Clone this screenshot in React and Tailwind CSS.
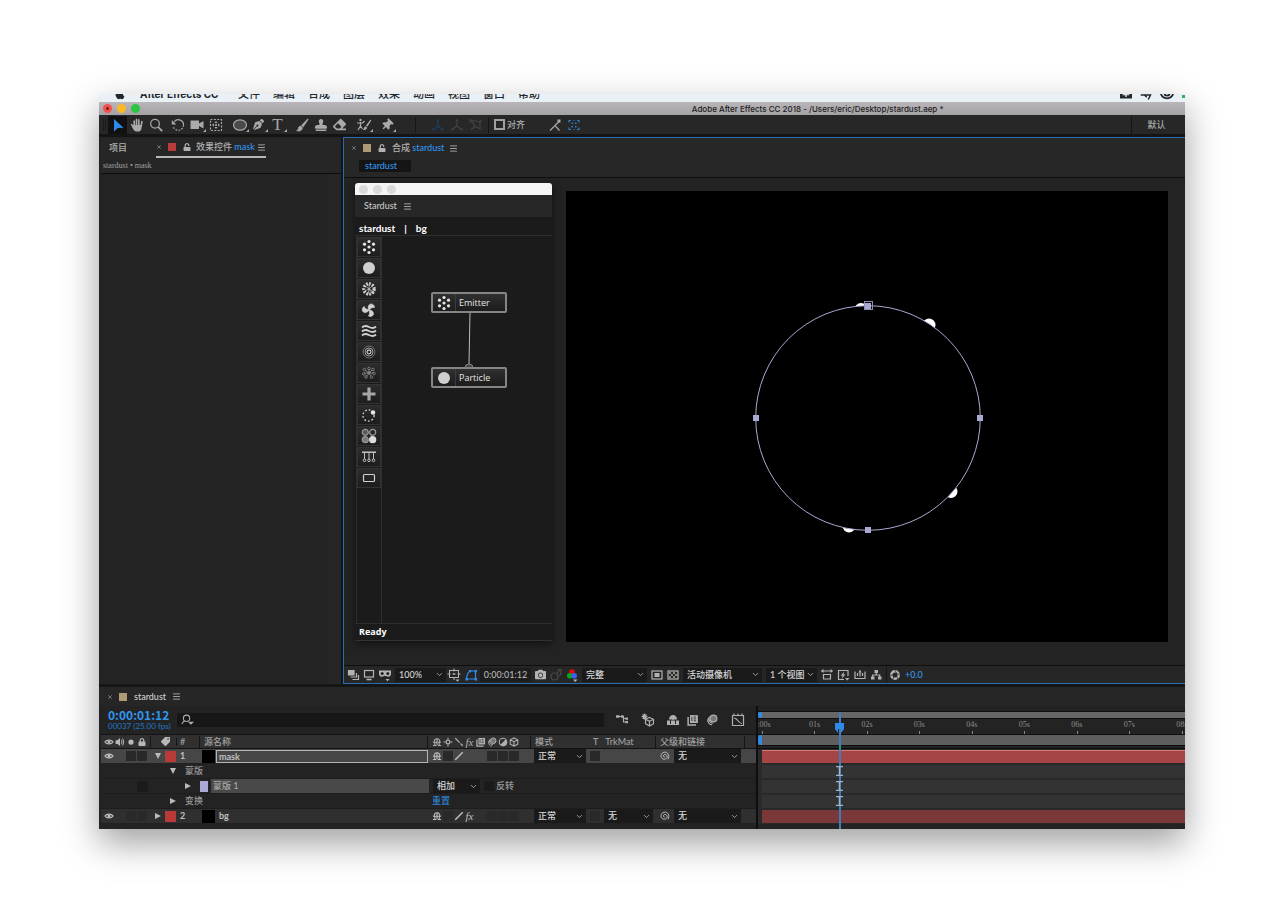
import { FaApple, FaCamera, FaEraser, FaLock, FaPenNib, FaStamp, FaTag, FaThumbtack, FaUnlock } from 'react-icons/fa'
import { ChevronDown, Menu, X } from 'lucide-react'
import clsx from 'clsx'

const MENUS = ['文件', '编辑', '合成', '图层', '效果', '动画', '视图', '窗口', '帮助']
const SECONDS = ['0:00s', '01s', '02s', '03s', '04s', '05s', '06s', '07s', '08s']
// seconds of the composition that fit in the visible part of the ruler
const VISIBLE_SECONDS = 8.06

function Svg({ children, className = 'size-4' }) {
  return (
    <svg
      viewBox="0 0 16 16"
      className={clsx('shrink-0', className)}
      fill="none"
      stroke="currentColor"
      strokeWidth="1.2"
      aria-hidden="true"
    >
      {children}
    </svg>
  )
}

/* ---------- toolbar icons ---------- */

const SelectIcon = () => (
  <Svg><path d="M4 2v12.5l3.800-3.400 5.700-.4z" fill="#2d8ceb" stroke="none" /></Svg>
)
const HandIcon = () => (
  <Svg>
    <path d="M5.200 8.500V4M7.500 8V2.400M9.800 8V2.800M12.200 9l.7-4.500M2.600 7.600l2.600 4" strokeWidth="1.6" strokeLinecap="round" />
    <path d="M4.400 8h8.200v2.500c0 2-1.300 4-2.800 4H7.200c-1.400 0-2.700-1.500-3.700-4z" fill="currentColor" stroke="none" />
  </Svg>
)
const ZoomIcon = () => (
  <Svg><circle cx="7" cy="6.8" r="4.4" /><path d="M10.200 10l4 4.200" strokeWidth="1.8" /></Svg>
)
const RotateIcon = () => (
  <Svg>
    <path d="M4.300 4.600A5.200 5.200 0 0 1 13.500 8.300" />
    <path d="M13.500 8.300A5.300 5.300 0 0 1 3.300 10" strokeDasharray="1.6 1.4" />
    <path d="M1.800 3v4.600h4.500z" fill="currentColor" stroke="none" />
  </Svg>
)
const CameraIcon = () => (
  <Svg>
    <path d="M1.500 3.500h8.500v8.500H1.500zM10 6.500l4.500-2.500v7.500L10 9z" fill="currentColor" stroke="none" />
  </Svg>
)
const AnchorIcon = () => (
  <Svg>
    <rect x="2.5" y="2.5" width="11" height="11" strokeDasharray="2 1.4" />
    <path d="M8 4l1.600 2H6.400zM8 12l1.600-2H6.400zM4 8l2-1.600v3.200zM12 8l-2-1.600v3.200z" fill="currentColor" stroke="none" />
    <path d="M7 7l2 2M9 7L7 9" strokeWidth="0.8" />
  </Svg>
)
const EllipseIcon = () => (
  <Svg><ellipse cx="8" cy="8" rx="6.5" ry="5.2" fill="#4a4a4a" /></Svg>
)
const BrushIcon = () => (
  <Svg>
    <path d="M13.800 1.800L7.500 8.300l1.700 1.600 5-7.300zM6.800 9c-2 .2-2.400 1.600-2.600 3-.1.800-.8 1.300-1.700 1.600 2.800 1 5.700.3 6-2.800z" fill="currentColor" stroke="currentColor" strokeWidth="0.6" />
  </Svg>
)
const RotoIcon = () => (
  <Svg>
    <circle cx="4.5" cy="3" r="1.2" fill="currentColor" stroke="none" />
    <path d="M1 6h5.500M4.500 5v4l-2.500 4M4.500 9l2 3M6.500 6L8.500 4" />
    <path d="M14.500 2.500l-4.500 6 1.300 1.200L15.300 3.500zM9.500 9.300c-1.500.5-1 2.500-2.700 3.500 2.500.8 4.200-.5 4.200-2.200z" fill="currentColor" stroke="none" />
  </Svg>
)
const AxisIcon = () => (
  <Svg>
    <path d="M8 9V3M8 9l-4.500 3.500M8 9l4.500 3.500" />
    <path d="M8 1.500l1.500 2.500h-3zM2 13.800l.8-2.800 1.800 2zM14 13.800l-.8-2.800-1.800 2z" fill="currentColor" stroke="none" />
  </Svg>
)
const ViewAxisIcon = () => (
  <Svg><path d="M3 3l9 2v7L7 9zM12 5l2-2M7 9l-4 4M2 2v4" /></Svg>
)
const SnapEdgeIcon = () => (
  <Svg>
    <path d="M3 13.500l5-5 4.500 5M8 8.500l4-4" />
    <path d="M10.500 2.500h3v3h-3z" fill="currentColor" stroke="none" />
  </Svg>
)
const SnapBoxIcon = () => (
  <Svg>
    <path d="M3 5.500V3.500H5M11 3.500h2V5.500M13 10.500v2H11M5 12.500H3v-2" />
    <path d="M5.500 5.500h1.500v1.500H5.500zM9 5.500h1.500v1.500H9zM5.500 9h1.500v1.500H5.500zM9 9h1.500v1.500H9z" fill="currentColor" stroke="none" />
    <path d="M7.500 3.500h1M7.500 12.500h1" />
  </Svg>
)

/* ---------- Stardust icons ---------- */

const EMITTER_DOTS = [[8, 2.5], [8, 8], [8, 13.5], [3.5, 5.2], [12.5, 5.2], [3.5, 10.8], [12.5, 10.8]]
const AUX_DOTS = [[8, 8], [3.5, 4.5], [8, 3.5], [12, 4.5], [2.8, 9], [13, 8.5], [5, 12], [10.5, 12.2]]
const BLADE = 'M8 8C5.500 6.500 5.500 2.500 8 1.500c2-.5 4 .5 4.200 2.500-2 0-3 1.500-4.200 4z'

const EmitterIcon = () => (
  <Svg>
    <g fill="#e6e6e6" stroke="none">
      {EMITTER_DOTS.map(([x, y]) => <circle key={`${x}-${y}`} cx={x} cy={y} r="1.6" />)}
    </g>
  </Svg>
)
const ParticleIcon = () => (
  <Svg><circle cx="8" cy="8" r="6" fill="#cfcfcf" stroke="none" /></Svg>
)
const ReplicaIcon = () => (
  <Svg>
    <circle cx="8" cy="8" r="5.2" strokeWidth="3.2" strokeDasharray="1.7 1.3" />
    <path d="M8 8L3 4M8 8l5-4.500M8 8l5.500 3M8 8l-1 5.500M8 8l-5 2.500M8 8V3M8 8l3.500 5" strokeWidth="0.7" />
  </Svg>
)
const TurbulenceIcon = () => (
  <Svg>
    <g fill="currentColor" stroke="currentColor" strokeWidth="0.6">
      <path d={BLADE} transform="rotate(20 8 8)" />
      <path d={BLADE} transform="rotate(140 8 8)" />
      <path d={BLADE} transform="rotate(260 8 8)" />
    </g>
  </Svg>
)
const WaveIcon = () => (
  <Svg>
    <path d="M1 4.500c2-2 4-2 7-.5s5 1.500 7-.5M1 8.500c2-2 4-2 7-.5s5 1.500 7-.5M1 12.500c2-2 4-2 7-.5s5 1.500 7-.5" strokeWidth="1.8" />
  </Svg>
)
const FieldIcon = () => (
  <Svg>
    <circle cx="8" cy="8" r="6" strokeWidth="0.7" opacity="0.6" />
    <circle cx="8" cy="8" r="4" strokeWidth="0.9" opacity="0.8" />
    <circle cx="8" cy="8" r="1.9" strokeWidth="1.1" />
  </Svg>
)
const AuxIcon = () => (
  <Svg>
    <g stroke="#8a8a8a" strokeWidth="0.8">
      {AUX_DOTS.map(([x, y]) => <circle key={`${x}-${y}`} cx={x} cy={y} r="1.3" />)}
      <path d="M8 8L4 5M8 8V4M8 8l3-3M8 8H3M8 8h5M8 8l-2 3M8 8l2 3" />
    </g>
  </Svg>
)
const PlusIcon = () => (
  <Svg><path d="M8 1.500v13M1.500 8h13" stroke="#a6a6a6" strokeWidth="3.2" strokeLinecap="butt" /></Svg>
)
const OrbitIcon = () => (
  <Svg>
    <circle cx="7.5" cy="8.5" r="5.6" strokeDasharray="1.8 1.9" strokeWidth="1.3" />
    <circle cx="12" cy="5.5" r="2.3" fill="#e6e6e6" stroke="none" />
  </Svg>
)
const MaterialIcon = () => (
  <Svg>
    <circle cx="4.3" cy="4.3" r="3" fill="#5a5a5a" stroke="#999" />
    <circle cx="11.7" cy="4.3" r="3" stroke="#999" />
    <circle cx="4.3" cy="11.7" r="3" fill="#777" stroke="#999" />
    <circle cx="11.7" cy="11.7" r="3" fill="#dcdcdc" stroke="#dcdcdc" />
  </Svg>
)
const PhysicsIcon = () => (
  <Svg>
    <path d="M1 3.200h14" strokeWidth="1.4" />
    <path d="M3.500 4v6M8 4v6M12.500 4v6" strokeWidth="0.9" />
    <circle cx="3.5" cy="11.3" r="1.3" strokeWidth="0.9" />
    <circle cx="8" cy="11.3" r="1.3" strokeWidth="0.9" />
    <circle cx="12.5" cy="11.3" r="1.3" strokeWidth="0.9" />
  </Svg>
)
const GroupIcon = () => (
  <Svg><rect x="2.5" y="4.5" width="11" height="7" rx="1" /></Svg>
)

/* ---------- viewer footer icons ---------- */

const PreviewIcon = () => (
  <Svg>
    <path d="M3.500 3.500h5.500v4.500H3.500z" fill="currentColor" />
    <path d="M5.500 10h6v-4M7.500 12.500h6V8" />
  </Svg>
)
const MonitorIcon = () => (
  <Svg><rect x="3.5" y="3.500" width="9" height="6.500" /><path d="M5.500 12.500h5" strokeWidth="1.6" /></Svg>
)
const MaskViewIcon = () => (
  <Svg>
    <path d="M2 3.500h12v3.500c0 1.500-1.200 2.800-2.800 2.800-1.400 0-2-1-3.200-1s-1.800 1-3.200 1C3.200 9.800 2 8.500 2 7z" fill="currentColor" stroke="none" />
    <circle cx="5.2" cy="6.4" r="1.5" fill="#232323" stroke="none" />
    <circle cx="10.800" cy="6.4" r="1.5" fill="#232323" stroke="none" />
    <path d="M8.500 12h4l-2 2.200z" fill="currentColor" stroke="none" />
  </Svg>
)
const GridIcon = () => (
  <Svg>
    <rect x="3.500" y="3.500" width="9" height="7" strokeWidth="1" />
    <path d="M8 1.500v3M8 6v2M8 10v3M1.500 7h3M6.500 7h3M11.500 7h3" strokeWidth="1" />
    <path d="M9.500 12.500h4l-2 2.200z" fill="currentColor" stroke="none" />
  </Svg>
)
const MaskPathIcon = () => (
  <Svg>
    <path d="M3.500 12C4 7.500 5.500 4.500 7.500 4H12.500v8z" />
    <path d="M2.500 11h2.500v2.500H2.500zM6 3h2.200v2.200H6zM11.500 3h2.500v2.200h-2.500zM11.500 11h2.500v2.500h-2.500z" fill="currentColor" stroke="none" />
  </Svg>
)
const SnapshotIcon = () => (
  <Svg>
    <circle cx="6.500" cy="9.500" r="3.500" />
    <path d="M9 6l2.500-2.500M10 2.500h3v3M10.500 9a3 3 0 0 0 2-4" />
  </Svg>
)
const ChannelIcon = () => (
  <Svg>
    <g stroke="none">
      <circle cx="8" cy="5" r="2.800" fill="#e00a0a" />
      <circle cx="5.800" cy="8.800" r="2.800" fill="#08a51d" />
      <circle cx="10.200" cy="8.800" r="2.800" fill="#3a62f0" />
      <path d="M9 12.500h4.500l-2.300 2.400z" fill="currentColor" />
    </g>
  </Svg>
)
const RoiIcon = () => (
  <Svg>
    <rect x="3" y="4" width="10" height="8" />
    <path d="M5.500 6h5v4h-5z" fill="currentColor" stroke="none" />
  </Svg>
)
const TransparencyIcon = () => (
  <Svg>
    <rect x="3" y="4" width="10" height="8" />
    <path d="M4 5h2v2H4zM8 5h2v2H8zM6 7h2v2H6zM10 7h2v2h-2zM4 9h2v2H4zM8 9h2v2H8z" fill="currentColor" stroke="none" opacity="0.7" />
  </Svg>
)
const PixelAspectIcon = () => (
  <Svg>
    <path d="M2.500 4h11M4.500 7.500h7v4.500h-7z" />
    <path d="M4.500 2v4L2 4zM11.500 2v4L14 4z" fill="currentColor" stroke="none" />
  </Svg>
)
const FastPreviewIcon = () => (
  <Svg>
    <path d="M13 9V3.500H3.500v9h5.500" />
    <path d="M9.500 4.500L5.500 8.500h2.200L6.500 12l4-4.500H8.300z" fill="currentColor" stroke="none" />
    <path d="M10 11h4.500l-2.200 2.400z" fill="currentColor" stroke="none" />
  </Svg>
)
const TimelineIcon = () => (
  <Svg><path d="M3 4.500v7h10v-7M5.500 6v3M10.500 6v3M8 3.500v6M3 9.500" /><path d="M6.500 5.500L8 3l1.500 2.500z" fill="currentColor" stroke="none" /></Svg>
)
const FlowIcon = () => (
  <Svg>
    <path d="M6.500 3h3.500v3H6.500zM3 9.500h3.500v3H3zM10 9.500h3.500v3H10z" fill="currentColor" stroke="none" />
    <path d="M8.200 5v3M4.700 10V8h7v2" />
  </Svg>
)
const ApertureIcon = () => (
  <Svg>
    <circle cx="8" cy="8" r="3.700" strokeWidth="2.400" />
    <path d="M8 3l2 4M13 7l-4.500.5M11 12l-2-3.500M6 12.500l1-4M3 8.500l4-1" stroke="#262626" strokeWidth="0.7" />
  </Svg>
)

/* ---------- timeline icons ---------- */

const EyeIcon = () => (
  <Svg className="size-[10px]">
    <path d="M1.500 8C4 3.800 12 3.800 14.500 8 12 12.200 4 12.200 1.500 8z" strokeWidth="2" />
    <circle cx="8" cy="8" r="2.5" fill="currentColor" stroke="none" />
  </Svg>
)
const SpeakerIcon = () => (
  <Svg className="size-[10px]">
    <path d="M1 5h3l4-3.500v13L4 11H1z" fill="currentColor" stroke="none" />
    <path d="M10 4.500c1.500 2 1.500 5 0 7M12 2.500c2.500 3 2.500 8 0 11" strokeWidth="1.6" />
  </Svg>
)
const SoloIcon = () => (
  <Svg className="size-[10px]"><circle cx="8" cy="8" r="4.2" fill="currentColor" stroke="none" /></Svg>
)
const ShyIcon = () => (
  <Svg className="size-[10px]">
    <path d="M3.500 8c0-7 9-7 9 0M1.500 8.500h13M8 3v10.500M1.500 13.500h5M9.500 13.500h5M4.500 9v4M11.500 9v4" strokeWidth="1.7" />
  </Svg>
)
const SunIcon = () => (
  <Svg className="size-[10px]">
    <circle cx="8" cy="8" r="3" strokeWidth="2" />
    <path d="M8 1v3M8 12v3M1 8h3M12 8h3" strokeWidth="1.8" />
  </Svg>
)
const BackslashIcon = () => (
  <Svg className="size-[10px]"><path d="M2 2l12 12" strokeWidth="2" strokeDasharray="10 2" /></Svg>
)
const SlashIcon = () => (
  <Svg className="size-[10px]"><path d="M2 14L14 2" strokeWidth="2.2" /></Svg>
)
const BlendIcon = ({ className = 'size-[10px]' }) => (
  <Svg className={className}>
    <path d="M1.500 4v10.500H12" strokeWidth="2" />
    <path d="M4 1.500h10.500V12H4z" fill="currentColor" stroke="none" />
    <path d="M6.500 4v5.500M9 4h3M9 6.500h3M9 9h3" stroke="#333" />
  </Svg>
)
const BlurIcon = ({ className = 'size-[10px]' }) => (
  <Svg className={className}>
    <circle cx="10" cy="6" r="4.5" fill="#777" strokeWidth="1.5" />
    <path d="M5 3.500C2 6.500 5.500 13 9.500 12M3 6c-2 3.500 1.500 9 5 8.200" strokeWidth="1.5" />
  </Svg>
)
const AdjustIcon = () => (
  <Svg className="size-[10px]">
    <circle cx="8" cy="8" r="6" strokeWidth="1.8" />
    <path d="M12.200 3.800A6 6 0 1 1 3.800 12.200z" fill="currentColor" stroke="none" />
  </Svg>
)
const CubeIcon = () => (
  <Svg className="size-[10px]">
    <path d="M8 1.500l6 3v7l-6 3-6-3v-7zM2 4.500l6 3 6-3M8 7.500v7" strokeWidth="1.7" />
  </Svg>
)
const SpiralIcon = () => (
  <Svg className="size-[11px]">
    <path d="M8.500 8.500c-2 1-3.200-2-.8-3.200 3-1.300 5.500 2.500 3.300 5.200-2.800 3.200-8.600.8-8-3.800C3.600 1 11 0 13.500 4.500c1.200 2.200 1 5.500-.5 7.500" strokeWidth="1.4" />
  </Svg>
)
const MiniFlowIcon = () => (
  <Svg>
    <path d="M3 4.500h6.500v5.500h3M9.500 6.500h3" />
    <path d="M2 3.200h3.500v2.600H2zM7 3.200h2.500v2.600H7zM11.500 5.500h2.500v2.300h-2.500zM11.500 9h2.500v2.300h-2.500z" fill="currentColor" stroke="none" />
  </Svg>
)
const Draft3dIcon = () => (
  <Svg>
    <path d="M4.500 1.500v6M1.500 4.500h6M2.500 2.500l4 4M6.500 2.500l-4 4" />
    <path d="M9.500 5.500l4 1.800v4.400L9.500 14 5.500 11.700V7.300zM5.500 7.300l4 2 4-2M9.500 9.300v4.500" />
  </Svg>
)
const HideShyIcon = () => (
  <Svg>
    <path d="M4 7.500c0-6 8-6 8 0zM2 8.500h3v4.500H2zM6 8.500h4v4.500H6zM11 8.500h3v4.500h-3z" fill="currentColor" stroke="none" />
    <path d="M2 12.500h12M8 5v3" />
  </Svg>
)
const GraphIcon = () => (
  <Svg>
    <path d="M2.500 3.500h11V13.500h-11zM4 1.500v2M8 1.500v2M12 1.500v2" />
    <path d="M4 6c4 0 4 5.500 8 5.500" />
  </Svg>
)

/* ---------- controls ---------- */

function ToolButton({ label, children, active, more, className }) {
  return (
    <button
      type="button"
      aria-label={label}
      className={clsx(
        'relative flex h-[18px] w-[19px] shrink-0 items-center justify-center',
        active && 'bg-[#111]',
        className,
      )}
    >
      {children}
      {more && (
        <svg viewBox="0 0 3 3" className="absolute right-0 bottom-[2px] size-[3px]" aria-hidden="true">
          <path d="M3 0v3H0z" fill="currentColor" />
        </svg>
      )}
    </button>
  )
}

function IconButton({ label, children, className }) {
  return (
    <button
      type="button"
      aria-label={label}
      className={clsx('flex h-4 w-4 shrink-0 items-center justify-center', className)}
    >
      {children}
    </button>
  )
}

function Select({ label, value, className }) {
  return (
    <span className={clsx('relative flex h-[14px] shrink-0 items-center bg-[#1a1a1a]', className)}>
      <select
        aria-label={label}
        defaultValue={value}
        className="h-full w-full appearance-none bg-transparent pl-1 text-[9px] leading-[14px] font-medium text-[#d6d6d6]"
      >
        <option>{value}</option>
      </select>
      <ChevronDown className="pointer-events-none absolute right-[2px] size-[9px] text-[#a0a0a0]" strokeWidth={2.5} />
    </span>
  )
}

const Divider = ({ className }) => <span className={clsx('w-px shrink-0 bg-[#161616]', className)} />
const PanelMenu = () => (
  <button type="button" aria-label="面板菜单"><Menu className="size-[9px] text-[#a8a8a8]" strokeWidth={2.5} /></button>
)
const CloseTab = () => (
  <button type="button" aria-label="关闭"><X className="size-[6px] text-[#8c8c8c]" strokeWidth={3} /></button>
)

function MenuBar() {
  return (
    <nav className="flex h-2 items-end overflow-hidden bg-[#e9f1f7] pl-[15px] text-[11px] leading-4 text-[#22272b]">
      <FaApple className="mb-[2px] size-3 shrink-0" />
      <span className="ml-[14px] w-[85px] shrink-0 font-[Inter] text-[10px] font-bold whitespace-nowrap">After Effects CC</span>
      <ul className="ml-[13px] flex gap-[13px]">
        {MENUS.map((name) => (
          <li key={name} className="whitespace-nowrap"><a href="#menu">{name}</a></li>
        ))}
      </ul>
      <div className="ml-auto flex items-end gap-2">
        <Svg className="mb-[2px] size-3"><path d="M0 2h16v12H0z" fill="currentColor" stroke="none" /><path d="M8 2v10M3.500 9h9" stroke="#fff" strokeWidth="1.6" /></Svg>
        <Svg className="mb-px size-3"><path d="M1 8h13l-3 6M6 8l3 3" strokeWidth="2" /></Svg>
        <Svg className="mb-[2px] size-[14px]"><ellipse cx="8" cy="8" rx="7" ry="6" strokeWidth="2" /><circle cx="8" cy="8" r="3" strokeWidth="2" /></Svg>
        <span className="mb-1 size-[3px] bg-[#2fae66]" />
      </div>
    </nav>
  )
}

function TitleBar() {
  return (
    <header className="flex h-[13px] items-center bg-linear-to-b from-[#b9b5b9] to-[#a5a2a5] pl-1">
      <div className="flex gap-[5px]">
        <button type="button" aria-label="关闭窗口" className="flex size-[9px] items-center justify-center rounded-full bg-[#f4504d]">
          <span className="size-[3px] rounded-full bg-[#7d1210]" />
        </button>
        <button type="button" aria-label="最小化" className="size-[9px] rounded-full bg-[#fbb927]" />
        <button type="button" aria-label="缩放" className="size-[9px] rounded-full bg-[#2bc540]" />
      </div>
      <h1 className="ml-[51%] font-[Inter] text-[8px] leading-3 font-medium whitespace-nowrap text-[#1d1d1d]">
        Adobe After Effects CC 2018 - /Users/eric/Desktop/stardust.aep *
      </h1>
    </header>
  )
}

function Toolbar() {
  return (
    <div className="flex h-[19px] items-center bg-[#272727] pl-1 text-[#aaa]">
      <span className="mr-[2px] h-3 w-[3px] border-x border-[#1a1a1a]" />
      <div className="flex">
        <ToolButton label="选取工具" active><SelectIcon /></ToolButton>
        <ToolButton label="手形工具"><HandIcon /></ToolButton>
        <ToolButton label="缩放工具"><ZoomIcon /></ToolButton>
      </div>
      <div className="ml-[3px] flex">
        <ToolButton label="旋转工具"><RotateIcon /></ToolButton>
        <ToolButton label="摄像机工具" more><CameraIcon /></ToolButton>
        <ToolButton label="锚点工具"><AnchorIcon /></ToolButton>
      </div>
      <div className="ml-[5px] flex">
        <ToolButton label="椭圆工具" more><EllipseIcon /></ToolButton>
        <ToolButton label="钢笔工具" more><FaPenNib className="size-[11px]" /></ToolButton>
        <ToolButton label="文字工具" more>
          <span className="font-['Liberation_Serif'] text-[17px] leading-4">T</span>
        </ToolButton>
      </div>
      <div className="ml-[5px] flex">
        <ToolButton label="画笔工具"><BrushIcon /></ToolButton>
        <ToolButton label="仿制图章工具"><FaStamp className="size-3" /></ToolButton>
        <ToolButton label="橡皮擦工具"><FaEraser className="size-[13px]" /></ToolButton>
      </div>
      <div className="ml-[5px] flex gap-1">
        <ToolButton label="Roto 笔刷工具" more><RotoIcon /></ToolButton>
        <ToolButton label="操控点工具" more><FaThumbtack className="size-3 rotate-45" /></ToolButton>
      </div>
      <Divider className="ml-[19px] h-4" />
      <div className="ml-3 flex text-[#444]">
        <ToolButton label="本地轴模式" className="text-[#1d4166]"><AxisIcon /></ToolButton>
        <ToolButton label="世界轴模式"><AxisIcon /></ToolButton>
        <ToolButton label="视图轴模式"><ViewAxisIcon /></ToolButton>
      </div>
      <Divider className="ml-[3px] h-4" />
      <label className="ml-[5px] flex items-center gap-[2px] text-[9px] leading-4">
        <input type="checkbox" className="size-[11px] appearance-none border-2 border-[#a0a0a0]" />
        对齐
      </label>
      <div className="ml-5 flex">
        <ToolButton label="对齐边缘"><SnapEdgeIcon /></ToolButton>
        <ToolButton label="对齐特征" className="text-[#2d7fca]"><SnapBoxIcon /></ToolButton>
      </div>
      <Divider className="ml-auto h-[19px]" />
      <button type="button" className="w-[53px] pr-1 text-[9px] leading-4">默认</button>
    </div>
  )
}

function EffectControls() {
  return (
    <section className="flex w-[242px] shrink-0 flex-col bg-[#232323] pt-px pl-[2px]">
      <div className="flex h-5 items-center bg-[#262626] text-[9px] leading-4">
        <a href="#project" className="ml-2 w-[47px] text-[#b0b0b0]">项目</a>
        <div className="flex h-5 w-[110px] items-center border-b-2 border-[#b8b8b8] text-[#b0b0b0]">
          <CloseTab />
          <span className="ml-[6px] size-[8px] bg-[#b83c3c]" />
          <FaUnlock className="ml-[7px] size-[8px]" />
          <span className="ml-[5px] whitespace-nowrap">效果控件 <span className="text-[#3096ee]">mask</span></span>
          <span className="ml-auto flex"><PanelMenu /></span>
        </div>
      </div>
      <div className="flex h-4 items-center border-b border-[#0c0c0c] bg-[#262626] pl-[2px] font-['Liberation_Serif'] text-[8px] font-normal text-[#a0a0a0]">
        stardust • mask
      </div>
      <div className="flex-1 border-r-[13px] border-[#262626]" />
    </section>
  )
}

const TOOLS = [
  ['Emitter', EmitterIcon],
  ['Particle', ParticleIcon],
  ['Replica', ReplicaIcon],
  ['Turbulence', TurbulenceIcon],
  ['Wave', WaveIcon],
  ['Field', FieldIcon],
  ['Auxiliary', AuxIcon],
  ['Transform', PlusIcon],
  ['Motion', OrbitIcon],
  ['Material', MaterialIcon],
  ['Physics', PhysicsIcon],
  ['Group', GroupIcon],
]

function Node({ name, icon: Icon, className }) {
  return (
    <div
      className={clsx(
        'absolute left-[49px] flex h-[21px] w-[76px] items-center rounded-[2px] border-2 border-[#858585] bg-linear-to-b from-[#303030] to-[#1c1c1c] text-[9px] text-[#e6e6e6]',
        className,
      )}
    >
      <span className="flex h-full w-[23px] items-center justify-center border-r border-[#3c3c3c]"><Icon /></span>
      <span className="pl-[3px] font-['Open_Sans'] leading-4">{name}</span>
    </div>
  )
}

function StardustWindow() {
  return (
    <aside className="mt-[5px] mb-6 flex w-[197px] shrink-0 flex-col overflow-hidden rounded-t-[3px] border-b border-[#333] bg-[#1c1b1b] shadow-[0_3px_8px_rgba(0,0,0,0.5)]">
      <div className="flex h-3 items-center gap-[5px] bg-[#f5f5f5] pl-1">
        <span className="size-[9px] rounded-full bg-[#dadada]" />
        <span className="size-[9px] rounded-full bg-[#dadada]" />
        <span className="size-[9px] rounded-full bg-[#dadada]" />
      </div>
      <div className="flex h-[22px] items-center gap-[6px] bg-[#272727] pl-[9px] text-[9px] text-[#c8c8c8]">
        Stardust <PanelMenu />
      </div>
      <div className="flex h-[19px] items-end gap-[9px] border-b border-[#2e2e2e] pl-1 text-[10px] leading-[14px] font-bold text-white">
        <span>stardust</span><span>|</span><span>bg</span>
      </div>
      <div className="flex flex-1">
        <div className="ml-px w-[26px] border-x border-[#2e2e2e]">
          {TOOLS.map(([name, Icon]) => (
            <button
              key={name}
              type="button"
              aria-label={name}
              className="mt-px flex h-5 w-full items-center justify-center border border-[#333] bg-linear-to-b from-[#2c2c2c] to-[#1d1d1d] text-[#d0d0d0]"
            >
              <Icon />
            </button>
          ))}
        </div>
        <div className="relative flex-1">
          <svg className="absolute top-[76px] left-[76px] h-[56px] w-5" viewBox="0 0 20 56" aria-hidden="true">
            <path d="M12 0L11 52" stroke="#bbb" strokeWidth="1" />
            <circle cx="11" cy="56" r="4" fill="#444" stroke="#888" />
          </svg>
          <Node name="Emitter" icon={EmitterIcon} className="top-[56px]" />
          <Node name="Particle" icon={ParticleIcon} className="top-[131px]" />
        </div>
      </div>
      <div className="h-[17px] border-t border-[#2e2e2e] pl-1 font-['Open_Sans'] text-[9px] leading-4 font-bold text-white">Ready</div>
    </aside>
  )
}

function Canvas() {
  return (
    <svg viewBox="0 0 602 451" className="mt-[13px] mr-[17px] mb-[23px] ml-[14px] min-w-0 flex-1 self-start bg-black" role="img" aria-label="合成视图">
      <defs>
        <clipPath id="outside">
          <path clipRule="evenodd" d="M0 0h602v451H0zM414.300 227a112.300 112.300 0 1 0-224.600 0a112.300 112.300 0 1 0 224.600 0z" />
        </clipPath>
      </defs>
      <g clipPath="url(#outside)" fill="#fff">
        <circle cx="295" cy="118.500" r="6.5" />
        <circle cx="363" cy="134" r="6.5" />
        <circle cx="385" cy="300.500" r="6.5" />
        <circle cx="283" cy="335" r="6.5" />
      </g>
      <circle cx="302" cy="227" r="112.3" fill="none" stroke="#a9a8d0" strokeWidth="1" />
      <g fill="#a9a8d0">
        <rect x="299" y="112" width="6" height="6" />
        <rect x="411" y="224" width="6" height="6" />
        <rect x="299" y="336" width="6" height="6" />
        <rect x="187" y="224" width="6" height="6" />
      </g>
      <rect x="298.5" y="110.5" width="8" height="8" fill="none" stroke="#8f8eb4" />
    </svg>
  )
}

function ViewerFooter() {
  return (
    <footer className="flex h-[18px] items-center overflow-hidden border-t border-[#0f0f0f] bg-[#262626] pl-px text-[#b4b4b4]">
      <IconButton label="始终预览此视图"><PreviewIcon /></IconButton>
      <IconButton label="主查看器"><MonitorIcon /></IconButton>
      <IconButton label="沉浸式"><MaskViewIcon /></IconButton>
      <Select label="放大率" value="100%" className="ml-[2px] w-[51px]" />
      <IconButton label="网格和参考线"><GridIcon /></IconButton>
      <IconButton label="蒙版路径可见性" className="ml-px text-[#2d8ceb]"><MaskPathIcon /></IconButton>
      <button type="button" className="ml-px h-[14px] w-[51px] bg-[#1d1d1d] text-[9px] leading-[14px]">0:00:01:12</button>
      <IconButton label="拍摄快照" className="ml-px"><FaCamera className="size-[11px]" /></IconButton>
      <IconButton label="显示快照" className="text-[#484848]"><SnapshotIcon /></IconButton>
      <IconButton label="通道"><ChannelIcon /></IconButton>
      <Select label="分辨率" value="完整" className="ml-[2px] w-[65px]" />
      <IconButton label="目标区域" className="ml-[2px]"><RoiIcon /></IconButton>
      <IconButton label="透明网格"><TransparencyIcon /></IconButton>
      <Select label="3D 视图" value="活动摄像机" className="ml-[2px] w-[79px]" />
      <Select label="视图布局" value="1 个视图" className="ml-1 w-[51px]" />
      <IconButton label="像素长宽比" className="ml-[2px]"><PixelAspectIcon /></IconButton>
      <IconButton label="快速预览"><FastPreviewIcon /></IconButton>
      <IconButton label="时间轴" className="ml-px"><TimelineIcon /></IconButton>
      <IconButton label="流程图"><FlowIcon /></IconButton>
      <Divider className="ml-[2px] h-4" />
      <IconButton label="重置曝光度"><ApertureIcon /></IconButton>
      <button type="button" className="ml-[2px] text-[9px] leading-4 text-[#3096ee]">+0.0</button>
    </footer>
  )
}

function Composition() {
  return (
    <section className="ml-[2px] flex min-w-0 flex-1 flex-col border-y border-l border-[#2a6cb4] bg-[#232323]">
      <div className="flex h-5 items-center bg-[#272727] pl-[7px] text-[9px] leading-4 text-[#b0b0b0]">
        <CloseTab />
        <span className="ml-[6px] size-[8px] bg-[#ae9a74]" />
        <FaUnlock className="ml-[7px] size-[8px]" />
        <span className="mr-[5px] ml-[6px]">合成 <span className="text-[#3096ee]">stardust</span></span>
        <PanelMenu />
      </div>
      <div className="flex h-5 items-start border-b border-[#0f0f0f] bg-[#272727] pt-[2px] pl-[15px]">
        <a href="#stardust" className="h-3 w-[52px] bg-[#151515] pl-[6px] text-[9px] leading-3 text-[#3096ee]">stardust</a>
      </div>
      <div className="flex flex-1 pl-[11px]">
        <StardustWindow />
        <Canvas />
      </div>
      <ViewerFooter />
    </section>
  )
}

/* ---------- timeline ---------- */

const Cell = ({ on, children }) => (
  <span className="flex h-3 w-[11px] shrink-0 items-center justify-center">
    {on ? <span className="size-[10px] bg-[#292929]" /> : children}
  </span>
)

const Twirl = ({ open }) => (
  <button type="button" aria-label={open ? '折叠' : '展开'} className="flex w-[6px] justify-center">
    <svg viewBox="0 0 6 6" className={clsx('size-[6px]', open && 'rotate-90')} aria-hidden="true">
      <path d="M0 0l6 3-6 3z" fill="#bbb" />
    </svg>
  </button>
)

function LayerHeader() {
  return (
    <div className="flex h-[15px] items-center border-y border-[#141414] bg-[#303030] text-[9px] leading-3 text-[#a0a0a0]">
      <div className="flex w-[50px] shrink-0 border-r border-[#161616] pl-[2px] text-[#b8b8b8]">
        <Cell><EyeIcon /></Cell>
        <Cell><SpeakerIcon /></Cell>
        <Cell><SoloIcon /></Cell>
        <Cell><FaLock className="size-[8px]" /></Cell>
      </div>
      <div className="flex w-[49px] shrink-0 items-center border-r border-[#161616] pl-[10px]">
        <FaTag className="size-[9px] rotate-90 text-[#b8b8b8]" />
        <Divider className="ml-[6px] h-2" />
        <span className="ml-[3px]">#</span>
      </div>
      <div className="w-[228px] shrink-0 border-r border-[#161616] pl-1">源名称</div>
      <div className="flex w-[103px] shrink-0 border-r border-[#161616] pl-[3px] text-[#b0b0b0]">
        <Cell><ShyIcon /></Cell>
        <Cell><SunIcon /></Cell>
        <Cell><BackslashIcon /></Cell>
        <Cell><i className="font-['Liberation_Serif'] text-[11px]">fx</i></Cell>
        <Cell><BlendIcon /></Cell>
        <Cell><BlurIcon /></Cell>
        <Cell><AdjustIcon /></Cell>
        <Cell><CubeIcon /></Cell>
      </div>
      <div className="w-[60px] shrink-0 pl-1">模式</div>
      <div className="flex w-[65px] shrink-0 gap-[7px] border-r border-[#161616] pl-[2px]"><span>T</span><span>TrkMat</span></div>
      <div className="mr-[10px] w-[89px] shrink-0 border-r border-[#161616] pl-1">父级和链接</div>
    </div>
  )
}

function LayerRow({ index, name, selected, effects, trackMatte }) {
  return (
    <div className={clsx('flex h-[15px] items-center border-b border-[#222] text-[9px] leading-3 text-[#c0c0c0]', selected ? 'bg-[#464646]' : 'bg-[#2f2f2f]')}>
      <div className="flex w-[50px] shrink-0 pl-[2px]">
        <Cell><EyeIcon /></Cell>
        <Cell />
        <Cell on />
        <Cell on />
      </div>
      <div className="flex w-[49px] shrink-0 items-center pl-1">
        <Twirl open={selected} />
        <span className="ml-1 size-[11px] bg-[#b83a38]" />
        <span className="ml-1 font-bold">{index}</span>
      </div>
      <div className="flex w-[228px] shrink-0 items-center">
        <span className="ml-[2px] h-[13px] w-[13px] bg-black" />
        {selected ? (
          <input
            aria-label="图层名称"
            defaultValue={name}
            className="ml-px h-[13px] min-w-0 flex-1 border border-[#b5b5b5] bg-[#464646] px-[2px] font-bold"
          />
        ) : (
          <span className="ml-1 font-bold">{name}</span>
        )}
      </div>
      <div className="flex w-[103px] shrink-0 pl-[3px]">
        <Cell><ShyIcon /></Cell>
        <Cell on />
        <Cell><SlashIcon /></Cell>
        <Cell>{effects && <i className="font-['Liberation_Serif'] text-[11px]">fx</i>}</Cell>
        <Cell />
        <Cell on />
        <Cell on />
        <Cell on />
      </div>
      <div className="w-[58px] shrink-0 pl-[3px]">
        <Select label={`${name} 模式`} value="正常" className="w-[52px]" />
      </div>
      <div className="flex w-[67px] shrink-0 items-center gap-1">
        <Cell on />
        {trackMatte && <Select label={`${name} TrkMat`} value="无" className="w-[49px]" />}
      </div>
      <div className="flex w-[99px] shrink-0 items-center">
        <IconButton label="父级关联器" className="h-3!"><SpiralIcon /></IconButton>
        <Select label={`${name} 父级`} value="无" className="ml-[2px] w-[67px]" />
      </div>
    </div>
  )
}

const PropertyRow = ({ children }) => (
  <div className="flex h-[15px] items-center border-b border-[#1d1d1d] text-[9px] leading-3 text-[#9a9a9a]">{children}</div>
)

function LayerList() {
  return (
    <div className="flex w-[657px] shrink-0 flex-col pl-[2px]">
      <div className="flex h-7 items-center pl-[7px]">
        <div className="w-[69px] text-[#3096ee]">
          <button type="button" className="block h-3 font-['Noto_Sans_CJK_SC'] text-[12px] leading-3 font-bold">0:00:01:12</button>
          <p className="text-[8px] leading-[10px] font-normal whitespace-nowrap text-[#2277c4]">00037 (25.00 fps)</p>
        </div>
        <label className="flex h-[14px] w-[427px] items-center bg-[#171717] pl-[3px] text-[#b0b0b0]">
          <Svg className="size-[14px]">
            <circle cx="7.5" cy="6" r="3.6" />
            <path d="M5 8.800L2 12.500M10.500 10.500h4l-2 2z" fill="currentColor" />
          </Svg>
          <input aria-label="搜索图层" className="h-full min-w-0 flex-1 bg-transparent text-[9px]" />
        </label>
        <div className="ml-[10px] flex items-center text-[#b0b0b0]">
          <IconButton label="合成微型流程图"><MiniFlowIcon /></IconButton>
          <IconButton label="草图 3D" className="ml-[10px]"><Draft3dIcon /></IconButton>
          <IconButton label="隐藏隐蔽图层" className="ml-[9px]"><HideShyIcon /></IconButton>
          <IconButton label="帧混合" className="ml-1"><BlendIcon className="size-3" /></IconButton>
          <IconButton label="运动模糊" className="ml-[3px]"><BlurIcon className="size-3" /></IconButton>
          <IconButton label="图表编辑器" className="ml-[10px]"><GraphIcon /></IconButton>
        </div>
      </div>
      <LayerHeader />
      <LayerRow index={1} name="mask" selected />
      <PropertyRow>
        <span className="ml-[69px] flex"><Twirl open /></span>
        <span className="ml-[9px]">蒙版</span>
      </PropertyRow>
      <PropertyRow>
        <span className="ml-9 size-[11px] bg-[#1b1b1b]" />
        <span className="ml-[37px] flex"><Twirl /></span>
        <span className="ml-[9px] h-[11px] w-[8px] bg-[#aaa8d4]" />
        <span className="ml-[3px] h-[14px] w-[218px] bg-[#4a4949] pl-[2px] leading-[14px] text-[#a8a8a8]">蒙版 1</span>
        <Select label="蒙版模式" value="相加" className="ml-[4px] w-[47px]" />
        <label className="ml-1 flex items-center gap-[2px]">
          <input type="checkbox" className="size-[10px] appearance-none bg-[#1b1b1b]" />
          反转
        </label>
      </PropertyRow>
      <PropertyRow>
        <span className="ml-[69px] flex"><Twirl /></span>
        <span className="ml-[9px] w-[247px]">变换</span>
        <button type="button" className="font-medium text-[#2d86d6]">重置</button>
      </PropertyRow>
      <LayerRow index={2} name="bg" effects trackMatte />
    </div>
  )
}

const Keyframe = () => (
  <svg viewBox="0 0 7 10" className="h-[10px] w-[7px]" aria-hidden="true">
    <path d="M0 .5h7M0 9.500h7M3.500 0v10" stroke="#9cb6d2" strokeWidth="1.5" fill="none" />
  </svg>
)

function TrackArea() {
  return (
    <div className="relative min-w-0 flex-1 overflow-hidden border-l-2 border-[#0e0e0e] bg-[#232323] pt-[5px]">
      <div className="flex h-2 border-y border-[#0e0e0e] bg-[#666]">
        <span className="h-full w-1 rounded-l-full bg-[#2d8ceb]" />
      </div>
      <div className="flex h-[15px] pl-[4px]">
        {SECONDS.map((label) => (
          <div key={label} className="relative shrink-0" style={{ width: `${100 / VISIBLE_SECONDS}%` }}>
            <span className="absolute top-0 left-0 -translate-x-1/2 font-['Liberation_Serif'] text-[8px] leading-3 font-normal text-[#8e8e8e]">{label}</span>
            <span className="absolute bottom-0 left-0 h-[3px] w-px bg-[#888]" />
          </div>
        ))}
      </div>
      <div className="flex h-3 border-y border-[#0e0e0e] bg-[#5e5e5e]">
        <span className="h-full w-1 rounded-l-sm bg-[#2d8ceb]" />
      </div>
      <div className="h-[3px] border-b border-[#0e0e0e]" />
      <div className="border-l-4 border-[#2a2a2a]">
        <div className="h-[15px] border-y border-[#292929] bg-[#a64545]"><div className="h-px bg-[#d47a74]" /></div>
        <div className="h-[15px] border-y border-[#292929] bg-[#333]" />
        <div className="h-[15px] border-y border-[#292929] bg-[#333]" />
        <div className="h-[15px] border-y border-[#292929] bg-[#333]" />
        <div className="h-[15px] border-y border-[#292929] bg-[#7a3838]" />
      </div>
      {/* playhead */}
      <div className="absolute top-[6px] bottom-0 left-[77px] flex w-[9px] flex-col items-center">
        <span className="absolute inset-y-0 left-1 w-[2px] bg-[#3f7cbc]" />
        <svg viewBox="0 0 9 10" className="relative mt-[11px] h-[10px] w-[9px] shrink-0" aria-hidden="true">
          <path d="M0 0h9v6L6 10V6H3v4L0 6z" fill="#2d8ceb" />
        </svg>
        <div className="relative mt-[33px] flex flex-col gap-[5px]">
          <Keyframe />
          <Keyframe />
          <Keyframe />
        </div>
        <span className="absolute top-[34px] left-1 size-[2px] bg-[#18b04c]" />
      </div>
    </div>
  )
}

function Timeline() {
  return (
    <section className="mt-[3px] bg-[#232323]">
      <div className="flex h-[19px] items-center bg-[#262626] pl-2 text-[9px] leading-4 text-[#d0d0d0]">
        <CloseTab />
        <span className="ml-[6px] size-[8px] bg-[#ae9a74]" />
        <span className="mr-[6px] ml-[7px]">stardust</span>
        <PanelMenu />
      </div>
      <div className="flex *:pb-[5px]">
        <LayerList />
        <TrackArea />
      </div>
    </section>
  )
}

export default function App() {
  return (
    <main className="min-h-screen bg-white pt-[94px] pr-[95px] pb-[94px] pl-[99px] font-[Lato,'Noto_Sans_CJK_SC',sans-serif] font-medium">
      <div className="overflow-hidden bg-[#151515] shadow-[0_14px_34px_rgba(0,0,0,0.38)]">
        <MenuBar />
        <TitleBar />
        <Toolbar />
        <div className="mt-[3px] flex">
          <EffectControls />
          <Composition />
        </div>
        <Timeline />
      </div>
    </main>
  )
}
